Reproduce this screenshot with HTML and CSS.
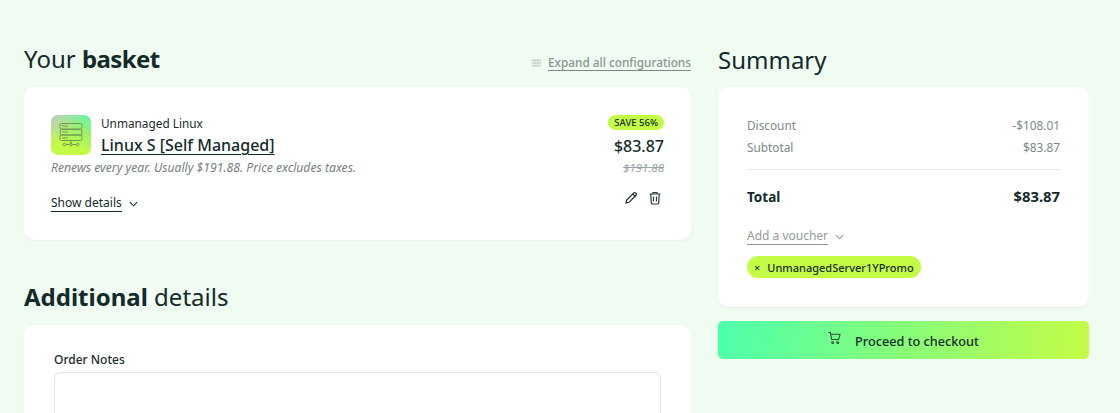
FILE: index.html
```html
<!DOCTYPE html>
<html lang="en">
<head>
<meta charset="utf-8">
<title>Basket</title>
<link rel="stylesheet" href="styles.css">
</head>
<body>
<main class="page">
  <section class="left">
    <div class="head-row">
      <h1 class="title">Your <b class="basket">basket</b></h1>
      <a class="expand">
        <svg class="expand-icon" viewBox="0 0 12 10" fill="none" stroke="currentColor" stroke-width="1"><path d="M1 2h5.500M9 2h2M1 5h2M5.500 5H11M1 8h5.500M9 8h2"/><path d="M7.500 .5v3M4.500 3.500v3M7.500 6.500v3"/></svg>
        <span class="expand-text">Expand all configurations</span>
      </a>
    </div>
    <div class="card item">
      <div class="item-top">
        <div class="logo">
          <svg viewBox="0 0 40 40" width="40" height="40" fill="none" stroke="#6f9a55" stroke-width="1"><rect x="9" y="8.500" width="22" height="5.500" rx="1.500"/><rect x="9" y="14.500" width="22" height="5.500" rx="1.500"/><rect x="9" y="20" width="22" height="5.500" rx="1.500"/><path d="M11 11h6M11 17h6M11 23h6M20 26v3.500M14.500 29.500h4M21.500 29.500h4"/><circle cx="13.300" cy="29.500" r="1.300"/><circle cx="20" cy="29.500" r="1.300"/><circle cx="26.700" cy="29.500" r="1.300"/></svg>
        </div>
        <div class="item-names">
          <div class="item-kind">Unmanaged Linux</div>
          <div class="item-name">Linux S [Self Managed]</div>
        </div>
        <div class="item-price">
          <span class="save">SAVE 56%</span>
          <span class="price">$83.87</span>
        </div>
      </div>
      <div class="renew-row">
        <span class="renew">Renews every year. Usually $191.88. Price excludes taxes.</span>
        <span class="old">$191.88</span>
      </div>
      <div class="actions-row">
        <a class="details"><span class="details-text">Show details</span>
          <svg class="chev" viewBox="0 0 10 6" fill="none" stroke="currentColor" stroke-width="1.200"><path d="M1 1l4 4 4-4"/></svg>
        </a>
        <div class="actions">
          <svg class="act" viewBox="0 0 14 14" fill="none" stroke="#1c2b2b" stroke-width="1.200"><path d="M2 12l.7-3L9.800 1.900a1.200 1.200 0 0 1 1.700 0l.6.6a1.200 1.200 0 0 1 0 1.700L5 11.300z"/><path d="M8.700 3l2.300 2.300"/></svg>
          <svg class="act" viewBox="0 0 14 14" fill="none" stroke="#2a3a3a" stroke-width="1.200"><path d="M1.500 3h11M5 3V1.500h4V3M2.800 3l.5 9.200a1 1 0 0 0 1 .8h5.400a1 1 0 0 0 1-.8l.5-9.200M5.500 5.500v5M8.500 5.500v5"/></svg>
        </div>
      </div>
    </div>
    <h2 class="title second"><b>Additional</b> details</h2>
    <div class="card notes">
      <label class="notes-label" for="notes">Order Notes</label>
      <textarea class="notes-box" id="notes"></textarea>
    </div>
  </section>
  <aside class="right">
    <h2 class="title summary-title">Summary</h2>
    <div class="card summary">
      <div class="line"><span>Discount</span><span>-$108.01</span></div>
      <div class="line"><span>Subtotal</span><span>$83.87</span></div>
      <div class="rule"></div>
      <div class="total"><span>Total</span><span class="total-value">$83.87</span></div>
      <a class="voucher"><span class="voucher-text">Add a voucher</span>
        <svg class="chev" viewBox="0 0 10 6" fill="none" stroke="currentColor" stroke-width="1.200"><path d="M1 1l4 4 4-4"/></svg>
      </a>
      <div class="promo"><span class="promo-x">×</span><span>UnmanagedServer1YPromo</span></div>
    </div>
    <a class="checkout">
      <svg class="cart" viewBox="0 0 14 14" fill="none" stroke="#2c4a3c" stroke-width="1.100"><path d="M.5 1h2l1.500 7.500h7.500L13 3H3"/><circle cx="5" cy="12" r="1"/><circle cx="10.500" cy="12" r="1"/></svg>
      <span>Proceed to checkout</span>
    </a>
  </aside>
</main>
</body>
</html>
```
FILE: styles.css
```css
* { box-sizing: border-box; }
html, body { margin: 0; height: 100%; }
body {
  background: #f0fbf1;
  color: #132a2a;
  font-family: "Noto Sans", "Open Sans", sans-serif;
  overflow: hidden;
}
.page {
  display: grid;
  grid-template-columns: 667px 371px;
  column-gap: 27px;
  padding: 42px 31px 0 24px;
  height: 413px;
  overflow: hidden;
}
.title {
  margin: 0;
  font-size: 24px;
  line-height: 34px;
  font-weight: 400;
  color: #132a2a;
}
.title b { font-weight: 700; }
.basket { letter-spacing: -0.6px; }
.head-row {
  display: flex;
  justify-content: space-between;
  align-items: flex-start;
  height: 45px;
}
.expand {
  display: flex;
  align-items: center;
  gap: 6px;
  margin-top: 12px;
  font-size: 11.800px;
  line-height: 16px;
  color: #8a9590;
}
.expand-icon { width: 11px; height: 10px; color: #a9b3ae; }
.expand-text { border-bottom: 1px solid #7d8783; font-weight: 500; }
.card {
  background: #fff;
  border-radius: 10px;
  box-shadow: 0 1px 2px rgba(30, 60, 40, 0.06);
}
.item { height: 153px; padding: 28px 27px 0; }
.item-top { display: flex; height: 40px; }
.logo {
  width: 40px;
  height: 40px;
  border-radius: 7px;
  background: linear-gradient(205deg, #5ff7b0 0%, #a0ee70 35%, #c4fb45 70%), #c4fb45;
  position: relative;
  overflow: hidden;
}
.logo::before {
  content: "";
  position: absolute;
  inset: 0;
  background: linear-gradient(135deg, rgba(200,200,200,0.9) 0%, rgba(200,200,200,0) 45%);
}
.logo svg { position: relative; display: block; }
.item-names { margin-left: 10px; flex: 1; }
.item-kind { font-size: 11.800px; line-height: 16px; color: #1b2a2a; }
.item-name {
  font-size: 16px;
  line-height: 20px;
  margin-top: 4px;
  color: #132a2a;
  font-weight: 500;
  text-decoration: underline;
  text-decoration-thickness: 1px;
  text-underline-offset: 3px;
}
.item-price { display: flex; flex-direction: column; align-items: flex-end; }
.save {
  background: #c4fb45;
  border-radius: 8px;
  font-size: 9.500px;
  line-height: 15px;
  padding: 0 6px;
  font-weight: 500;
  color: #132a2a;
}
.price { font-size: 16px; line-height: 22px; margin-top: 5px; font-weight: 500; }
.renew-row {
  display: flex;
  justify-content: space-between;
  align-items: center;
  height: 18px;
  margin-top: 3px;
  font-size: 12.200px;
  font-style: italic;
  color: #75817e;
}
.old { color: #98a3a8; text-decoration: line-through; font-size: 11.500px; }
.actions-row {
  display: flex;
  justify-content: space-between;
  align-items: center;
  margin-top: 19px;
}
.details { display: flex; align-items: center; gap: 7px; font-size: 12px; line-height: 16px; color: #132a2a; }
.details-text { border-bottom: 1px solid #132a2a; }
.chev { width: 9px; height: 6px; }
.actions { display: flex; gap: 10px; padding-right: 2px; margin-top: -11px; }
.act { width: 14px; height: 14px; }
.second { margin-top: 40px; }
.notes { margin-top: 11px; height: 120px; padding: 27px 30px 0; }
.notes-label { display: block; font-size: 12px; line-height: 16px; font-weight: 500; color: #1b2a2a; }
.notes-box {
  display: block;
  width: 100%;
  height: 100px;
  margin-top: 4px;
  border: 1px solid #e4e7e6;
  border-radius: 6px;
  background: #fff;
  resize: none;
}
.summary-title { height: 45px; padding-top: 1px; line-height: 34px; }
.summary { height: 220px; padding: 30px 29px 0; }
.line {
  display: flex;
  justify-content: space-between;
  font-size: 11.800px;
  line-height: 16px;
  margin-bottom: 6px;
  color: #7d8986;
}
.rule { height: 1px; background: #e4e7e6; margin-top: 14px; }
.total {
  display: flex;
  justify-content: space-between;
  align-items: baseline;
  margin-top: 17px;
  font-size: 13.500px;
  line-height: 19px;
  font-weight: 700;
  color: #132a2a;
}
.total-value { font-size: 14.800px; }
.voucher { display: flex; align-items: center; gap: 7px; margin-top: 21px; font-size: 12px; line-height: 16px; color: #959b99; }
.voucher-text { border-bottom: 1px solid #8d9391; }
.promo {
  display: inline-flex;
  align-items: center;
  height: 22px;
  margin-top: 11px;
  padding: 0 7px;
  gap: 7px;
  background: #c4fb45;
  border-radius: 11px;
  font-size: 11px;
  font-weight: 500;
  color: #1b2a2a;
}
.promo-x { font-size: 11px; }
.checkout {
  display: flex;
  align-items: center;
  justify-content: center;
  gap: 14px;
  height: 38px;
  margin-top: 14px;
  padding-top: 1px;
  border-radius: 5px;
  background: linear-gradient(100deg, #4cffac 0%, #c4fb45 100%);
  font-size: 12.700px;
  font-weight: 500;
  color: #132a2a;
}
.cart { width: 13px; height: 14px; margin-top: -5px; }
```
